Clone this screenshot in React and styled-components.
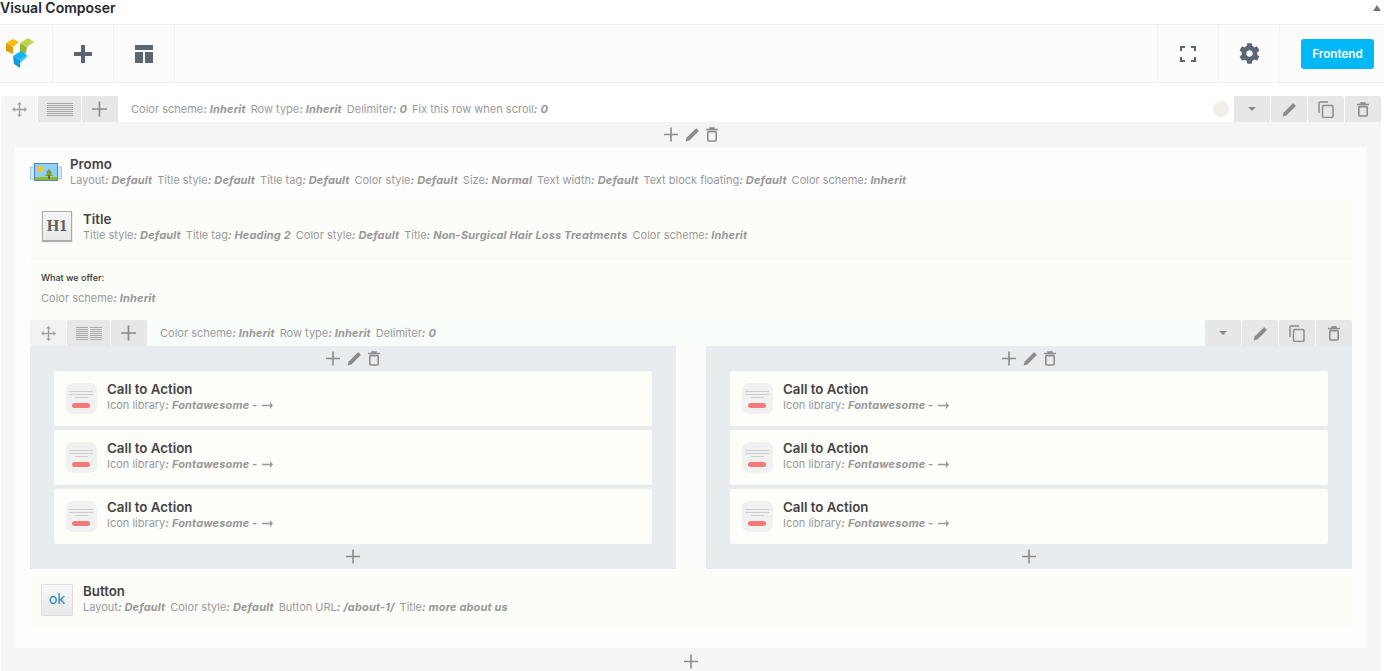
import React from "react"
import styled, { createGlobalStyle } from "styled-components"
import { FaCog } from "react-icons/fa"

const GlobalStyle = createGlobalStyle`
  html, body {
    margin: 0;
    padding: 0;
    background: #fff;
    overflow: hidden;
    height: 671px;
  }
  body {
    font-family: Inter, "Liberation Sans", sans-serif;
    color: #333;
  }
`

const Page = styled.div`
  width: 1384px;
  height: 671px;
  overflow: hidden;
`
const PanelHeading = styled.div`
  height: 24px;
  display: flex;
  align-items: flex-start;
  justify-content: space-between;
  border-bottom: 1px solid #eee;
  padding-right: 3px;
`
const PanelTitle = styled.h2`
  margin: 0;
  font-size: 14px;
  font-weight: 600;
  line-height: 15px;
  color: #23282d;
`
const ToggleArrow = styled.span`
  margin-top: 5px;
  width: 0;
  height: 0;
  border-left: 4px solid transparent;
  border-right: 4px solid transparent;
  border-bottom: 6px solid #72777c;
`
const Toolbar = styled.div`
  height: 57px;
  display: flex;
  align-items: stretch;
  background: #fcfcfc;
  border-bottom: 1px solid #eee;
`
const ToolCell = styled.div`
  width: ${p => p.$w || 61}px;
  box-sizing: border-box;
  padding-right: ${p => p.$pr || 0}px;
  border-right: 1px solid #f3f3f3;
  display: flex;
  align-items: center;
  justify-content: center;
  color: #5a6671;
`
const Spacer = styled.div`
  flex: 1;
  border-right: 1px solid #f3f3f3;
`
const FrontendCell = styled.div`
  width: 104px;
  display: flex;
  align-items: center;
  padding-left: 21px;
  box-sizing: border-box;
`
const FrontendButton = styled.button`
  width: 73px;
  height: 30px;
  border: 0;
  border-radius: 3px;
  background: #00b8f5;
  color: #fff;
  font-family: inherit;
  font-size: 11.7px;
  font-weight: 600;
  padding: 0;
`
const Content = styled.div`
  padding: 13px 3px 0 1px;
`
const ControlsBar = styled.div`
  height: 26px;
  display: flex;
  align-items: stretch;
  gap: 1px;
`
const ControlButton = styled.div`
  width: ${p => p.$w || 36}px;
  background: ${p => p.$bg || "#e7e7e7"};
  border-radius: 2px 2px 0 0;
  display: flex;
  align-items: center;
  justify-content: center;
  color: #8b8b8b;
  flex-shrink: 0;
`
const ControlsInfo = styled.div`
  flex: 1;
  padding-left: 12px;
  display: flex;
  align-items: center;
  white-space: nowrap;
`
const StatusDot = styled.span`
  width: 16px;
  height: 16px;
  border-radius: 50%;
  background: #f0efe9;
  align-self: center;
  margin-right: 4px;
`
const Params = styled.div`
  font-size: 11px;
  line-height: 14px;
  color: #9a9a9a;
  white-space: nowrap;
`
const ParamItem = styled.span`
  margin-right: 5px;
`
const ParamValue = styled.b`
  font-weight: 700;
  font-style: italic;
  letter-spacing: 0.15px;
  color: #989898;
`
const RowBody = styled.div`
  background: #f5f5f5;
  padding: 0 14px;
`
const MiniActions = styled.div`
  height: 25px;
  display: flex;
  align-items: center;
  justify-content: center;
  gap: 6px;
  color: #8b8b8b;
`
const BottomAdd = styled.div`
  height: ${p => p.$h}px;
  display: flex;
  align-items: center;
  justify-content: center;
  color: #8b8b8b;
`
const ColumnBox = styled.div`
  background: #fdfdfd;
  padding: 8px 0 21px;
`
const Element = styled.div`
  display: flex;
  align-items: flex-start;
  gap: ${p => p.$gap || 10}px;
  padding: ${p => p.$pad};
  height: ${p => p.$h}px;
  box-sizing: border-box;
`
const ElementText = styled.div`
  display: flex;
  flex-direction: column;
  gap: 1px;
`
const CardText = styled(ElementText)`
  padding-bottom: 4px;
`
const ElementTitle = styled.div`
  font-size: 13.3px;
  line-height: 16px;
  font-weight: 600;
  color: #444;
`
const Nested = styled.div`
  margin: 0 15px;
  background: #fcfdf9;
`
const TextBlock = styled.div`
  height: 62px;
  padding: 13px 11px 0;
  box-sizing: border-box;
  background: #fbfdf9;
  border-top: 1px solid #f7f9f5;
`
const TextLabel = styled.div`
  font-size: 9px;
  line-height: 12px;
  font-weight: 500;
  color: #333;
  margin-bottom: 7px;
`
const InnerControls = styled(ControlsBar)`
  background: #f9fdfa;
`
const ColumnsGrid = styled.div`
  display: grid;
  grid-template-columns: 646px 646px;
  justify-content: space-between;
  background: #fbfdfa;
`
const Column = styled.div`
  background: #e9ecee;
`
const Cards = styled.div`
  display: flex;
  flex-direction: column;
  gap: 4px;
  padding: 0 24px;
`
const Card = styled.div`
  height: 55px;
  background: #fdfdf9;
  border-radius: 2px;
  display: flex;
  align-items: center;
  gap: 10px;
  padding: 0 12px;
  box-sizing: border-box;
`
const ArrowIcon = styled.svg`
  width: 11px;
  height: 7px;
  vertical-align: 0;
  margin-left: 2px;
`
const IconWrap = styled.div`
  flex-shrink: 0;
  width: ${p => p.$w}px;
  height: ${p => p.$h}px;
  margin-top: ${p => p.$mt || 0}px;
`
const H1Tile = styled.div`
  width: 30px;
  height: 30px;
  flex-shrink: 0;
  box-sizing: border-box;
  border: 1px solid #a9a9a9;
  background: linear-gradient(#f5f5f5, #e8e8e8);
  box-shadow: 0 1px 1px rgba(0, 0, 0, 0.3);
  font-family: "Liberation Serif", serif;
  font-weight: 700;
  font-size: 16px;
  line-height: 28px;
  text-align: center;
  color: #5f5f5f;
`
const OkTile = styled.div`
  width: 32px;
  height: 32px;
  margin-top: 1px;
  flex-shrink: 0;
  box-sizing: border-box;
  border: 1px solid #dcdcdc;
  border-radius: 2px;
  background: linear-gradient(#f8f8f8, #e8e8e8);
  font-size: 14.5px;
  line-height: 28px;
  text-align: center;
  color: #1a8cc4;
`

const PlusThin = ({ size = 15 }) => (
  <svg width={size} height={size} viewBox="0 0 15 15">
    <path d="M7 0.5v14M0 7.5h14" stroke="currentColor" strokeWidth="1.6" fill="none" />
  </svg>
)
const Pencil = ({ size = 15 }) => (
  <svg width={size} height={size} viewBox="0 0 24 24" fill="currentColor">
    <path d="M1 23l1.4-6L16.8 2.6a1.5 1.5 0 0 1 2.1 0l2.5 2.5a1.5 1.5 0 0 1 0 2.1L7 21.6z" />
  </svg>
)
const Trash = ({ w = 12, h = 15 }) => (
  <svg width={w} height={h} viewBox="0 0 12 15" fill="none" stroke="currentColor">
    <path d="M0 2.5h12M4 2.5V1h4v1.5" strokeWidth="1.4" />
    <rect x="1.8" y="4.6" width="8.4" height="9.4" rx="1" strokeWidth="1.6" />
  </svg>
)
const Copy = () => (
  <svg width="16" height="17" viewBox="0 0 16 17" fill="none" stroke="currentColor" strokeWidth="1.5">
    <path d="M1 12V2a1 1 0 0 1 1-1h8" />
    <rect x="4.5" y="4.5" width="10.5" height="12" rx="1.2" />
  </svg>
)
const Caret = () => (
  <svg width="8" height="4" viewBox="0 0 8 4"><path d="M0 0h8L4 4z" fill="currentColor" /></svg>
)
const MoveIcon = () => (
  <svg width="15" height="15" viewBox="0 0 15 15" fill="#a0a0a0">
    <path d="M6.8 2h1.4v11H6.8zM2 6.8h11v1.4H2z" />
    <path d="M7.5 0L10 2.6H5zM7.5 15L5 12.4h5zM0 7.5L2.6 5v5zM15 7.5L12.4 10V5z" />
  </svg>
)
const LayoutLines = ({ cols }) => (
  <svg width="26" height="13" viewBox="0 0 26 13" fill="none" stroke="#a9a9a9" strokeWidth="1">
    {[0.5, 2.5, 4.5, 6.5, 8.5, 10.5, 12.5].map(y =>
      cols === 2 ? (
        <g key={y}>
          <path d={`M0 ${y}h12`} />
          <path d={`M14 ${y}h12`} />
        </g>
      ) : (
        <path key={y} d={`M0 ${y}h26`} />
      )
    )}
  </svg>
)

const LeftControls = ({ cols, moveBg }) => (
  <>
    <ControlButton $bg={moveBg}><MoveIcon /></ControlButton>
    <ControlButton $w={43}><LayoutLines cols={cols} /></ControlButton>
    <ControlButton><PlusThin size={16} /></ControlButton>
  </>
)
const RightControls = () => (
  <>
    <ControlButton><Caret /></ControlButton>
    <ControlButton><Pencil /></ControlButton>
    <ControlButton><Copy /></ControlButton>
    <ControlButton><Trash /></ControlButton>
  </>
)
const ColumnActions = () => (
  <MiniActions>
    <PlusThin />
    <Pencil />
    <Trash />
  </MiniActions>
)

const ParamList = ({ items }) => (
  <Params>
    {items.map(([k, v]) => (
      <ParamItem key={k}>{k}<ParamValue>: {v}</ParamValue></ParamItem>
    ))}
  </Params>
)

const Logo = () => (
  <svg width="30" height="32" viewBox="0 1 30 32">
    <path d="M1 6l7-4 6 3-6 5z" fill="#fdbb11" />
    <path d="M1 6l7 4v7l-7-3z" fill="#dfa010" />
    <path d="M15 6l8-5 6 4-7 5z" fill="#bcd44e" />
    <path d="M15 6l7 4-1 6-6 1z" fill="#9db52d" />
    <path d="M8 19l8-5 6 4-7 5z" fill="#10b4f0" />
    <path d="M8 19l7 4v8l-6-4z" fill="#0f9bd7" />
    <path d="M15 23l7-5v2l-7 6z" fill="#37c2f4" />
  </svg>
)
const LayoutIcon = () => (
  <svg width="18" height="18" viewBox="0 0 18 18" fill="currentColor">
    <path d="M0 0h18v5H0zM0 7h8v11H0zM10 7h8v11h-8z" />
  </svg>
)
const BoldPlus = () => (
  <svg width="18" height="18" viewBox="0 0 18 18" fill="currentColor">
    <path d="M7 0h4v7h7v4h-7v7H7v-7H0V7h7z" />
  </svg>
)
const FullscreenIcon = () => (
  <svg width="16" height="16" viewBox="0 0 16 16" fill="none" stroke="currentColor" strokeWidth="2">
    <path d="M1 5V1h4M11 1h4v4M15 11v4h-4M5 15H1v-4" />
  </svg>
)
const PromoIcon = () => (
  <svg width="32" height="18" viewBox="0 0 32 18">
    <rect x="0.5" y="4" width="31" height="12" fill="#cfe6f6" stroke="#a7c9e4" />
    <rect x="4.5" y="0.5" width="23" height="17" fill="#8fd0f4" stroke="#4a88bf" />
    <rect x="5" y="14" width="22" height="3" fill="#8dbb2e" />
    <circle cx="10" cy="6" r="3" fill="#fbc820" />
    <path d="M19 6l3 4h-6z" fill="#6a9a2a" />
    <path d="M19 8l4 5h-8z" fill="#7da630" />
    <rect x="18" y="12" width="2" height="4" fill="#8a5a2c" />
  </svg>
)
const CtaIcon = () => (
  <svg width="31" height="31" viewBox="0 0 31 31">
    <rect width="31" height="31" rx="7" fill="#f1f1f1" />
    <path d="M3 8.5h24M3 11.5h24M9 14.5h13" stroke="#cdcdcd" />
    <rect x="6" y="20" width="18" height="5" rx="2.5" fill="#f47a7a" />
  </svg>
)

const CallToAction = () => (
  <Card>
    <CtaIcon />
    <CardText>
      <ElementTitle>Call to Action</ElementTitle>
      <Params>
        Icon library<ParamValue>: Fontawesome - </ParamValue>
        <ArrowIcon viewBox="0 0 11 7"><path d="M0 2.7h8V0l3 3.5L8 7V4.3H0z" fill="#999" /></ArrowIcon>
      </Params>
    </CardText>
  </Card>
)

const CtaColumn = () => (
  <Column>
    <ColumnActions />
    <Cards>
      <CallToAction />
      <CallToAction />
      <CallToAction />
    </Cards>
    <BottomAdd $h={25}><PlusThin /></BottomAdd>
  </Column>
)

export default function App() {
  return (
    <Page>
      <GlobalStyle />
      <PanelHeading>
        <PanelTitle>Visual Composer</PanelTitle>
        <ToggleArrow />
      </PanelHeading>
      <Toolbar>
        <ToolCell $w={53} $pr={12}><Logo /></ToolCell>
        <ToolCell><BoldPlus /></ToolCell>
        <ToolCell><LayoutIcon /></ToolCell>
        <Spacer />
        <ToolCell><FullscreenIcon /></ToolCell>
        <ToolCell><FaCog size={21} /></ToolCell>
        <FrontendCell><FrontendButton>Frontend</FrontendButton></FrontendCell>
      </Toolbar>
      <Content>
        <ControlsBar>
          <LeftControls cols={1} moveBg="#f5f5f5" />
          <ControlsInfo>
            <ParamList items={[["Color scheme", "Inherit"], ["Row type", "Inherit"], ["Delimiter", "0"], ["Fix this row when scroll", "0"]]} />
          </ControlsInfo>
          <StatusDot />
          <RightControls />
        </ControlsBar>
        <RowBody>
          <ColumnActions />
          <ColumnBox>
            <Element $pad="1px 15px 0" $h={45} $gap={8}>
              <IconWrap $w={32} $h={18} $mt={7}><PromoIcon /></IconWrap>
              <ElementText>
                <ElementTitle>Promo</ElementTitle>
                <ParamList items={[["Layout", "Default"], ["Title style", "Default"], ["Title tag", "Default"], ["Color style", "Default"], ["Size", "Normal"], ["Text width", "Default"], ["Text block floating", "Default"], ["Color scheme", "Inherit"]]} />
              </ElementText>
            </Element>
            <Nested>
              <Element $pad="11px 12px 0" $h={58} $gap={11}>
                <H1Tile>H1</H1Tile>
                <ElementText>
                  <ElementTitle>Title</ElementTitle>
                  <ParamList items={[["Title style", "Default"], ["Title tag", "Heading 2"], ["Color style", "Default"], ["Title", "Non-Surgical Hair Loss Treatments"], ["Color scheme", "Inherit"]]} />
                </ElementText>
              </Element>
              <TextBlock>
                <TextLabel>What we offer:</TextLabel>
                <ParamList items={[["Color scheme", "Inherit"]]} />
              </TextBlock>
              <InnerControls>
                <LeftControls cols={2} moveBg="#f1f3f3" />
                <ControlsInfo>
                  <ParamList items={[["Color scheme", "Inherit"], ["Row type", "Inherit"], ["Delimiter", "0"]]} />
                </ControlsInfo>
                <RightControls />
              </InnerControls>
              <ColumnsGrid>
                <CtaColumn />
                <CtaColumn />
              </ColumnsGrid>
              <Element $pad="14px 11px 0" $h={58} $gap={10}>
                <OkTile>ok</OkTile>
                <ElementText>
                  <ElementTitle>Button</ElementTitle>
                  <ParamList items={[["Layout", "Default"], ["Color style", "Default"], ["Button URL", "/about-1/"], ["Title", "more about us"]]} />
                </ElementText>
              </Element>
            </Nested>
          </ColumnBox>
          <BottomAdd $h={26}><PlusThin /></BottomAdd>
        </RowBody>
      </Content>
    </Page>
  )
}
